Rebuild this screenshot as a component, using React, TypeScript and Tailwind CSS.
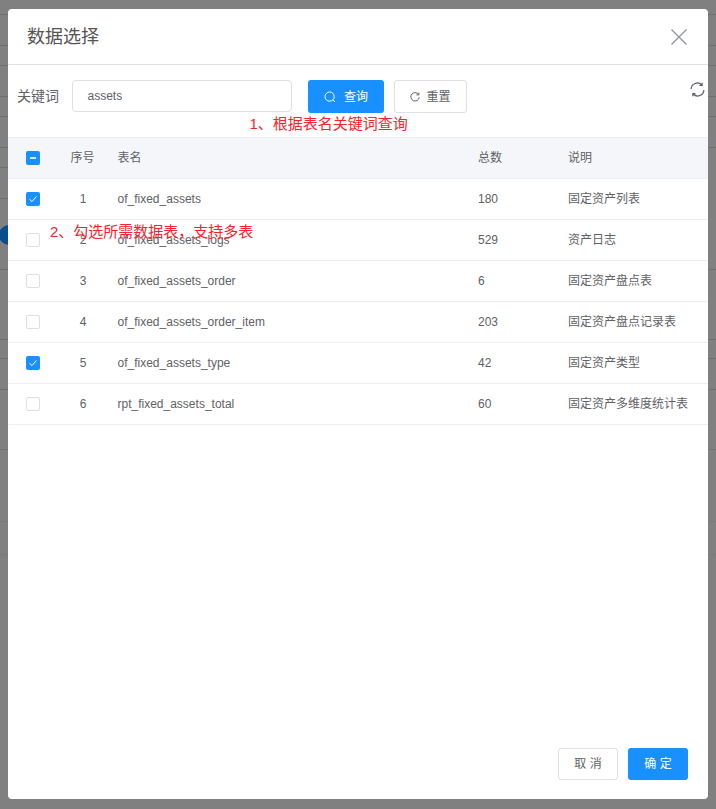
const sans = "font-['Liberation_Sans','Noto_Sans_CJK_SC',sans-serif]";

const backdropRows = [
  "h-[15px] border-[#6f6f6f]",
  "h-[31px] border-[#6f6f6f]",
  "h-[20px] border-[#6f6f6f]",
  "h-[31px] border-[#6f6f6f]",
  "h-[20px] border-[#6f6f6f]",
  "h-[31px] border-[#6f6f6f]",
  "h-[20px] w-[8px] border-[#6f6f6f]",
  "h-[31px] w-[8px] border-[#6f6f6f]",
  "h-[71px] border-[#6f6f6f]",
  "h-[70px] border-[#6f6f6f]",
  "h-[19px] border-[#6f6f6f]",
  "h-[31px] border-[#6f6f6f]",
  "h-[60px] border-[#747474]",
  "h-[72px] border-[#7a7a7a]",
  "h-[33px] border-[#7a7a7a]",
];

const rows = [
  { no: 1, name: "of_fixed_assets", total: 180, desc: "固定资产列表", checked: true },
  { no: 2, name: "of_fixed_assets_logs", total: 529, desc: "资产日志", checked: false },
  { no: 3, name: "of_fixed_assets_order", total: 6, desc: "固定资产盘点表", checked: false },
  { no: 4, name: "of_fixed_assets_order_item", total: 203, desc: "固定资产盘点记录表", checked: false },
  { no: 5, name: "of_fixed_assets_type", total: 42, desc: "固定资产类型", checked: true },
  { no: 6, name: "rpt_fixed_assets_total", total: 60, desc: "固定资产多维度统计表", checked: false },
];

const Checkbox = ({ state }: { state: "on" | "off" | "some" }) => {
  if (state === "off") {
    return <span className="block h-[14px] w-[14px] rounded-[2px] border border-[#dcdfe6] bg-white" />;
  }
  return (
    <span className="flex h-[14px] w-[14px] items-center justify-center rounded-[2px] bg-[#1890ff]">
      {state === "some" ? (
        <span className="block h-[2px] w-[6px] bg-white/80" />
      ) : (
        <svg width="10" height="10" viewBox="0 0 10 10" fill="none" stroke="white" strokeWidth="1">
          <path d="M1.5 5.2 L4 7.6 L8.5 2.4" />
        </svg>
      )}
    </span>
  );
};

export default function App() {
  return (
    <div className={`relative h-[809px] w-[716px] overflow-hidden bg-[#808080] ${sans}`}>
      {/* page behind the mask */}
      <div className="flex flex-col">
        {backdropRows.map((cls, i) => (
          <div key={i} className={`${cls} border-b`} />
        ))}
      </div>
      <div className="absolute left-[-1px] top-[225px] h-[20px] w-[30px] rounded-full bg-[#0a4d8c]" />

      {/* dialog */}
      <div className="absolute left-[8px] top-[9px] flex h-[790px] w-[700px] flex-col rounded-[4px] bg-white">
        <div className="flex h-[56px] shrink-0 items-center justify-between border-b border-[#dcdfe6] pl-[19px] pr-[20px]">
          <span className="text-[18px] leading-[52px] text-[#555555]">数据选择</span>
          <svg width="18" height="18" viewBox="0 0 18 18" fill="none" stroke="#909399" strokeWidth="1.3">
            <path d="M1.5 1.5 L16.5 16.5 M16.5 1.5 L1.5 16.5" />
          </svg>
        </div>

        <div className="relative flex h-[72px] shrink-0 items-start pl-[9px] pt-[15px]">
          <span className="w-[55px] text-[14px] leading-[32px] text-[#606266]">关键词</span>
          <div className="flex h-[32px] w-[220px] items-center rounded-[4px] border border-[#dcdfe6] pl-[14.5px] text-[12px] text-[#606266]">
            assets
          </div>
          <button className="ml-[16px] flex h-[33px] w-[76px] items-center justify-center gap-[8px] rounded-[3px] bg-[#1890ff] text-[12px] text-white">
            <svg width="12" height="12" viewBox="0 0 12 12" fill="none" stroke="white" strokeWidth="1">
              <circle cx="5.6" cy="5.6" r="4.6" />
              <path d="M9 9 L11 11" />
            </svg>
            查询
          </button>
          <button className="ml-[10px] flex h-[33px] w-[73px] items-center justify-center gap-[6px] rounded-[3px] border border-[#dcdfe6] bg-white text-[12px] text-[#606266]">
            <svg width="10" height="10" viewBox="0 0 10 10" fill="none" stroke="#606266" strokeWidth="1">
              <path d="M8.6 2.6 A4.2 4.2 0 1 0 9.2 5.4" />
              <path d="M8.8 0.6 V2.9 H6.5" />
            </svg>
            重置
          </button>
          {/* table refresh, sits at the far right of the toolbar */}
          <svg width="15" height="15" viewBox="0 0 16 16" fill="none" stroke="#5a5e66" strokeWidth="1.3" className="absolute left-[682px] top-[17px]">
            <path d="M1.2 7.5 A6.6 6.6 0 0 1 12.6 3.2" />
            <path d="M14.8 8.5 A6.6 6.6 0 0 1 3.4 12.8" />
            <path d="M12.9 0.8 V3.6 H10.2" />
            <path d="M3.1 15.2 V12.4 H5.8" />
          </svg>
        </div>

        <div className="grid h-[42px] shrink-0 grid-cols-[50px_50px_360px_90px_150px] items-center border-y border-[#ebeef5] bg-[#f5f6fa] text-[12px] text-[#606266]">
          <span className="pl-[18px]"><Checkbox state="some" /></span>
          <span className="pr-[1px] text-center">序号</span>
          <span className="pl-[9.5px]">表名</span>
          <span className="pl-[10px]">总数</span>
          <span className="pl-[10px]">说明</span>
        </div>
        {rows.map((row) => (
          <div
            key={row.no}
            className="grid h-[41px] shrink-0 grid-cols-[50px_50px_360px_90px_150px] items-center border-b border-[#ebeef5] text-[12px] text-[#606266]"
          >
            <span className="pl-[18px]"><Checkbox state={row.checked ? "on" : "off"} /></span>
            <span className="text-center">{row.no}</span>
            <span className="pl-[9.5px]">{row.name}</span>
            <span className="pl-[10px]">{row.total}</span>
            <span className="whitespace-nowrap pl-[10px]">{row.desc}</span>
          </div>
        ))}

        <div className="mt-auto flex justify-end gap-[10px] pb-[19px] pr-[20px]">
          <button className="h-[32px] w-[60px] rounded-[3px] border border-[#dcdfe6] bg-white text-[12px] text-[#606266]">取 消</button>
          <button className="h-[32px] w-[60px] rounded-[3px] bg-[#1890ff] text-[12px] text-white">确 定</button>
        </div>
      </div>

      {/* red annotations drawn over the screenshot */}
      <span className="absolute left-[249.5px] top-[114px] whitespace-nowrap text-[15px] leading-[20px] text-[#f5222d]">1、根据表名关键词查询</span>
      <span className="absolute left-[50px] top-[222px] whitespace-nowrap text-[15px] leading-[20px] text-[#f5222d]">2、勾选所需数据表，支持多表</span>
    </div>
  );
}
